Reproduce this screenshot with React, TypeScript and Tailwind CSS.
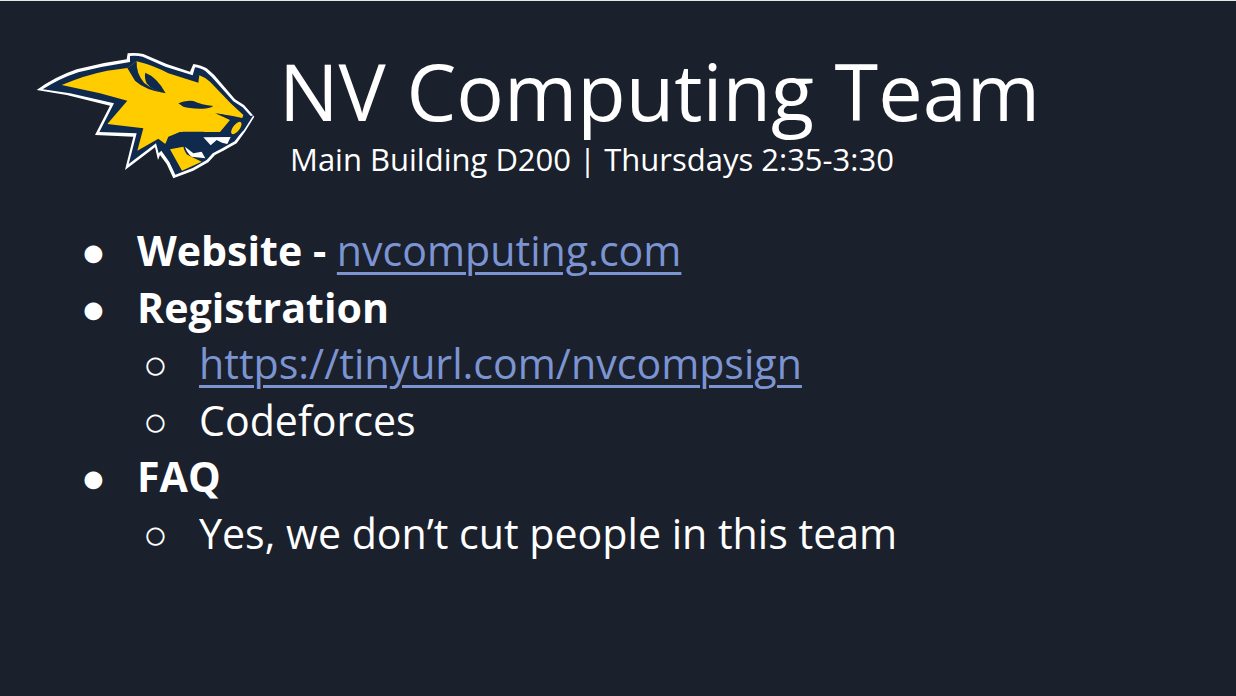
const Logo = () => (
  <svg className="shrink-0 w-[250px] h-[150px]" viewBox="0 0 750 450">
    {/* outer white outline */}
    <path fill="#ffffff" d="M50 150 Q105 110 170 88 Q245 68 320 58 L323 40 Q350 38 370 42 L440 72 L510 95 L520 72 Q545 76 560 85 Q585 105 600 125 L645 178 L672 195 L703 230 L675 275 L650 310 L610 332 L585 345 L565 367 L520 392 L460 415 L440 372 L420 345 L414 360 L405 322 L315 390 L340 290 L225 285 L270 197 L140 165 Z" />
    {/* navy layer */}
    <path fill="#0f2a4d" d="M68 148 Q120 115 175 97 Q250 78 330 66 L330 48 Q350 46 368 50 L436 80 L518 106 L525 82 Q545 85 556 93 Q578 112 594 132 L640 184 L668 202 L694 230 L668 272 L644 304 L604 326 L578 340 L560 360 L518 384 L466 404 L448 366 L424 332 L416 340 L408 310 L326 372 L350 280 L238 276 L282 190 L150 160 Z" />
    {/* yellow head */}
    <path fill="#ffcc00" d="M125 135 Q195 105 262 92 L322 84 L350 64 Q400 76 445 100 L535 128 L538 106 Q555 112 570 125 L632 190 L670 225 L666 236 L590 220 L630 240 L600 276 L550 276 L480 276 L445 290 L436 312 L415 296 L352 332 L370 265 L262 252 L322 182 L240 160 Z" />
    {/* ear */}
    <path fill="#0f2a4d" d="M322 84 L350 64 Q348 100 372 128 Q398 150 437 160 Q375 150 345 122 Z" />
    <path fill="#0f2a4d" d="M376 98 Q412 112 437 160 Q395 152 380 130 Q372 112 376 98 Z" />
    {/* eye */}
    <path fill="#0f2a4d" d="M475 190 Q495 180 520 183 Q545 195 580 198 Q565 208 540 206 Q505 204 490 200 Z" />
    {/* nose and muzzle */}
    <path fill="#0f2a4d" d="M585 220 Q630 226 670 235 L700 226 L672 270 L644 298 L620 300 L610 290 Q640 260 632 240 Z" />
    <ellipse fill="#ffcc00" cx="649" cy="264" rx="10" ry="22" transform="rotate(38 649 264)" />
    {/* mouth */}
    <path fill="#0f2a4d" d="M448 296 Q470 276 490 275 L550 275 L625 290 L632 300 L605 322 L578 338 L556 358 L510 340 L480 322 L448 322 L436 312 Z" />
    <path fill="#ffffff" d="M550 292 L632 291 L622 312 L606 308 L590 300 L572 316 Z" />
    <path fill="#ffffff" d="M495 320 L520 340 L545 335 L556 355 L515 350 Q500 338 495 320 Z" />
    {/* lower jaw */}
    <path fill="#ffcc00" d="M450 328 L490 320 Q495 340 505 346 L545 365 L486 392 L465 355 Z" />
  </svg>
)

const App = () => {
  return (
    <div className="w-[1236px] h-[696px] overflow-hidden bg-[#1a202c] border-t border-[#e8e8e8] font-['Open_Sans',sans-serif] text-white">
      <div className="flex pl-5 pt-[39px] h-[180px]">
        <Logo />
        <div className="ml-[9px] mt-[2px]">
          <h1 className="text-[79.2px] leading-[96px]">NV Computing Team</h1>
          <p className="text-[31px] leading-[42px] ml-[11px]">Main Building D200 | Thursdays 2:35-3:30</p>
        </div>
      </div>
      <ul className="pt-[41px] text-[41.14px] leading-[56.6px]">
        <li className="flex pl-[81px]">
          <span className="w-[56px]">●</span>
          <span className="font-bold whitespace-pre">Website - </span>
          <a className="text-[#7c94d2] underline decoration-[3px] underline-offset-[6px]">nvcomputing.com</a>
        </li>
        <li className="flex pl-[81px]">
          <span className="w-[56px]">●</span>
          <span className="font-bold">Registration</span>
        </li>
        <li className="flex pl-[143px]">
          <span className="w-[56px]">○</span>
          <a className="text-[#7c94d2] underline decoration-[3px] underline-offset-[6px]">https://tinyurl.com/nvcompsign</a>
        </li>
        <li className="flex pl-[143px]">
          <span className="w-[56px]">○</span>
          <span>Codeforces</span>
        </li>
        <li className="flex pl-[81px]">
          <span className="w-[56px]">●</span>
          <span className="font-bold">FAQ</span>
        </li>
        <li className="flex pl-[143px]">
          <span className="w-[56px]">○</span>
          <span>Yes, we don’t cut people in this team</span>
        </li>
      </ul>
    </div>
  )
}

export default App
